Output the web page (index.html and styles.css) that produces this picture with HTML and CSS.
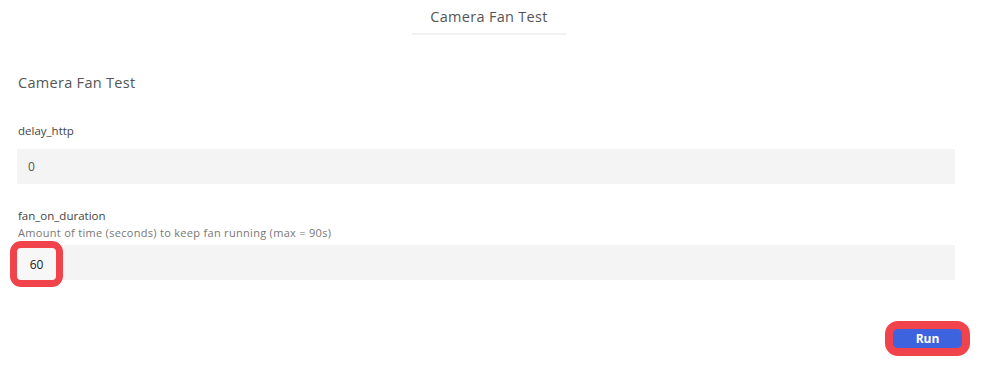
FILE: index.html
```html
<!DOCTYPE html>
<html>
<head>
<meta charset="utf-8">
<link rel="stylesheet" href="styles.css">
</head>
<body>
<header class="top">
  <div class="top-title">Camera Fan Test</div>
</header>
<main class="panel">
  <h2 class="heading">Camera Fan Test</h2>
  <div class="field f1">
    <div class="label">delay_http</div>
    <div class="input"><span class="val">0</span></div>
  </div>
  <div class="field f2">
    <div class="label">fan_on_duration</div>
    <div class="desc">Amount of time (seconds) to keep fan running (max = 90s)</div>
    <div class="input hl-wrap">
      <div class="hl"><span class="hl-val">60</span></div>
    </div>
  </div>
  <div class="actions">
    <div class="run-ring"><button class="run">Run</button></div>
  </div>
</main>
</body>
</html>
```
FILE: styles.css
```css
* { box-sizing: border-box; }
html, body { margin: 0; padding: 0; background: #fff; }
body { font-family: "Open Sans", "Liberation Sans", sans-serif; color: #555; width: 984px; height: 368px; overflow: hidden; }
.top { display: flex; justify-content: center; padding-top: 7px; padding-right: 6px; }
.top-title { width: 154px; text-align: center; font-size: 14.5px; line-height: 20px; letter-spacing: 0.3px; color: #555; padding-bottom: 6px; border-bottom: 2px solid #f1f1f1; }
.panel { padding: 0 29px 0 17px; }
.heading { margin: 38px 0 0 1px; font-weight: 400; font-size: 14.5px; line-height: 20px; letter-spacing: 0.3px; color: #555; }
.field { display: flex; flex-direction: column; }
.f1 { margin-top: 29px; }
.f2 { margin-top: 23px; }
.label { font-size: 11.5px; line-height: 17px; color: #444; margin-left: 1px; }
.desc { font-size: 11px; line-height: 17px; letter-spacing: 0.3px; color: #777; margin-left: 1px; }
.f1 .label { margin-bottom: 10px; }
.f2 .desc { margin-bottom: 4px; }
.input { height: 35px; background: #f4f4f4; display: flex; align-items: center; padding-left: 11px; font-size: 12px; color: #555; }
.hl-wrap { position: relative; padding-left: 0; }
.hl { position: absolute; left: -7px; top: -4px; width: 53px; height: 46px; border: 7px solid #f0434b; border-radius: 11px; background: #f7f7f7; display: flex; align-items: center; justify-content: center; }
.hl-val { font-size: 12px; color: #222; }
.actions { display: flex; justify-content: flex-end; margin-top: 41px; margin-right: -15px; }
.run-ring { border: 7px solid #f0434b; border-radius: 13px; padding: 1px; background: #f0434b; }
.run { display: block; width: 69px; height: 19px; border: 0; border-radius: 5px; background: #3d64de; color: #fff; font-family: "Open Sans", "Liberation Sans", sans-serif; font-weight: 700; font-size: 12px; line-height: 19px; padding: 0; }
```
